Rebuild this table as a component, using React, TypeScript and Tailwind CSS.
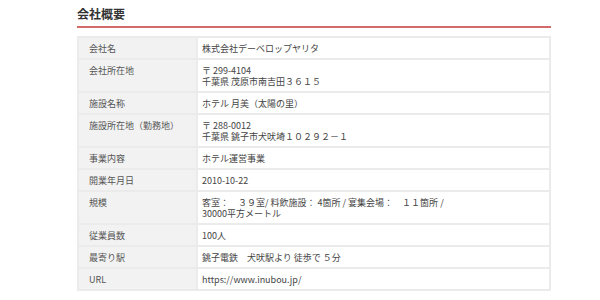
const rows: { label: string; value: string[] }[] = [
  { label: "会社名", value: ["株式会社デーベロップヤリタ"] },
  { label: "会社所在地", value: ["〒 299-4104", "千葉県 茂原市南吉田３６１５"] },
  { label: "施設名称", value: ["ホテル 月美（太陽の里）"] },
  { label: "施設所在地（勤務地）", value: ["〒 288-0012", "千葉県 銚子市犬吠埼１０２９２－１"] },
  { label: "事業内容", value: ["ホテル運営事業"] },
  { label: "開業年月日", value: ["2010-10-22"] },
  {
    label: "規模",
    value: ["客室：　３９室/ 料飲施設： 4箇所 / 宴集会場：　１１箇所 /", "30000平方メートル"],
  },
  { label: "従業員数", value: ["100人"] },
  { label: "最寄り駅", value: ["銚子電鉄　犬吠駅より 徒歩で ５分"] },
  { label: "URL", value: ["https://www.inubou.jp/"] },
];

const App = () => {
  return (
    <div className="w-[600px] h-[300px] bg-white overflow-hidden font-['Noto_Sans_CJK_JP',sans-serif]">
      <div className="ml-[77px] w-[474px] pt-[6px]">
        {/* title */}
        <h2 className="text-[12px] leading-[16px] font-bold text-[#333]">会社概要</h2>
        <div className="mt-[4px] h-[2px] bg-[#d46a6a]"></div>

        <table className="mt-[8px] w-full border-collapse text-[9px] leading-[11px]">
          <tbody>
            {rows.map((r) => (
              <tr key={r.label}>
                <th className="w-[119px] border-2 border-[#ebebeb] bg-[#f2f2f2] pl-[10px] pt-[5px] pb-[4px] text-left align-top font-normal text-[#555]">
                  {r.label}
                </th>
                <td className="border-2 border-[#ebebeb] pl-[4px] pt-[5px] pb-[4px] align-top text-[#444]">
                  {r.value.map((v) => (
                    <div key={v}>{v}</div>
                  ))}
                </td>
              </tr>
            ))}
          </tbody>
        </table>
      </div>
    </div>
  );
};
export default App;
